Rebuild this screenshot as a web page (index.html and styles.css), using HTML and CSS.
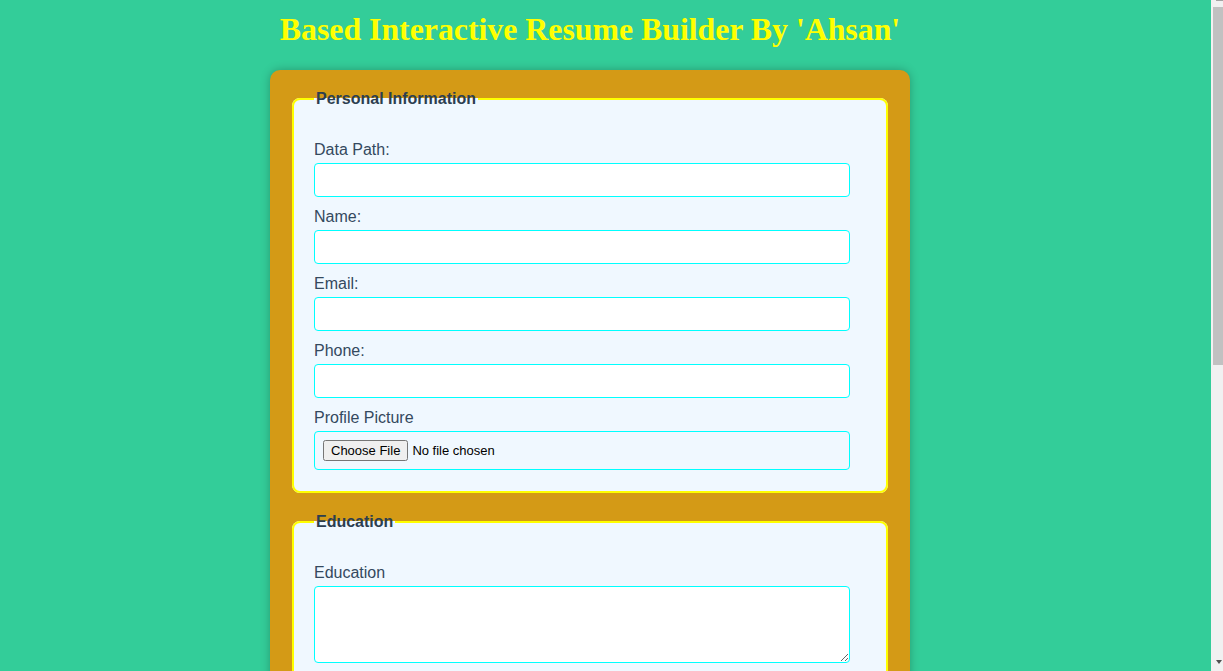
FILE: index.html
```html
<!DOCTYPE html>
<html lang="en">
<head>
<meta charset="UTF-8">
<title>Interactive Resume Builder</title>
<link rel="stylesheet" href="styles.css">
</head>
<body>
<div class="page">
  <h1 class="title">Based Interactive Resume Builder By 'Ahsan'</h1>
  <form class="card">
    <fieldset class="group">
      <legend class="legend">Personal Information</legend>
      <label class="lbl" for="path">Data Path:</label>
      <input class="field" id="path" type="text">
      <label class="lbl" for="name">Name:</label>
      <input class="field" id="name" type="text">
      <label class="lbl" for="email">Email:</label>
      <input class="field" id="email" type="email">
      <label class="lbl" for="phone">Phone:</label>
      <input class="field" id="phone" type="tel">
      <label class="lbl" for="pic">Profile Picture</label>
      <div class="filebox"><input class="file" id="pic" type="file"></div>
    </fieldset>
    <fieldset class="group">
      <legend class="legend">Education</legend>
      <label class="lbl" for="edu">Education</label>
      <textarea class="field area" id="edu"></textarea>
    </fieldset>
    <fieldset class="group">
      <legend class="legend">Skills</legend>
      <label class="lbl" for="skills">Skills</label>
      <textarea class="field area" id="skills"></textarea>
    </fieldset>
  </form>
</div>
<div class="scrollbar" aria-hidden="true">
  <div class="sb-up"></div>
  <div class="sb-thumb"></div>
  <div class="sb-down"></div>
</div>
</body>
</html>
```

FILE: styles.css
```css
html, body {
  margin: 0;
  padding: 0;
}
body {
  background: #33cd99;
  font-family: "Liberation Sans", Arial, sans-serif;
  color: #2c3e50;
}
.page {
  width: 640px;
  margin-left: 270px;
  padding-bottom: 40px;
}
.title {
  font-family: "Liberation Serif", "Times New Roman", serif;
  font-weight: bold;
  font-size: 31.8px;
  color: #ffff00;
  text-align: center;
  margin: 0;
  padding-top: 11px;
  line-height: 37px;
  height: 59px;
  white-space: nowrap;
}
.card {
  background: #d49a16;
  border-radius: 10px;
  box-shadow: 0 0 10px rgba(0, 0, 0, 0.25);
  padding: 20px 22px;
}
.group {
  background: #f0f8ff;
  border: 2px solid #ffff00;
  border-radius: 8px;
  margin: 0 0 20px 0;
  padding: 33px 20px 21px 20px;
  display: flex;
  flex-direction: column;
  align-items: flex-start;
}
.legend {
  font-weight: bold;
  font-size: 16px;
  color: #2c3e50;
  padding: 0 2px;
  margin-top: 1px;
}
.lbl {
  font-size: 16px;
  line-height: 17px;
  margin-bottom: 5px;
  color: #34495e;
}
.field {
  box-sizing: border-box;
  width: 536px;
  height: 34px;
  border: 1px solid #00ffff;
  border-radius: 4px;
  background: #ffffff;
  margin: 0 0 11px 0;
  padding: 8px;
  font-family: inherit;
  font-size: 14px;
}
.area {
  height: 77px;
  margin-bottom: 0;
}
.filebox {
  box-sizing: border-box;
  width: 536px;
  height: 39px;
  border: 1px solid #00ffff;
  border-radius: 4px;
  padding: 8px;
  display: flex;
  align-items: center;
}
.file {
  font-family: "Liberation Sans", Arial, sans-serif;
  font-size: 13px;
  color: #000;
}
.scrollbar {
  position: fixed;
  top: 0;
  right: 0;
  width: 12px;
  height: 100%;
  background: #f1f1f1;
}
.sb-up {
  position: absolute;
  top: 0;
  left: 5px;
  width: 7px;
  height: 1px;
  background: #a3a3a3;
}
.sb-thumb {
  position: absolute;
  top: 7px;
  left: 2px;
  right: 0;
  height: 358px;
  background: #c1c1c1;
}
.sb-down {
  position: absolute;
  bottom: 7px;
  left: 5px;
  width: 0;
  height: 0;
  border-left: 3.5px solid transparent;
  border-right: 3.5px solid transparent;
  border-top: 4px solid #505050;
}
```
